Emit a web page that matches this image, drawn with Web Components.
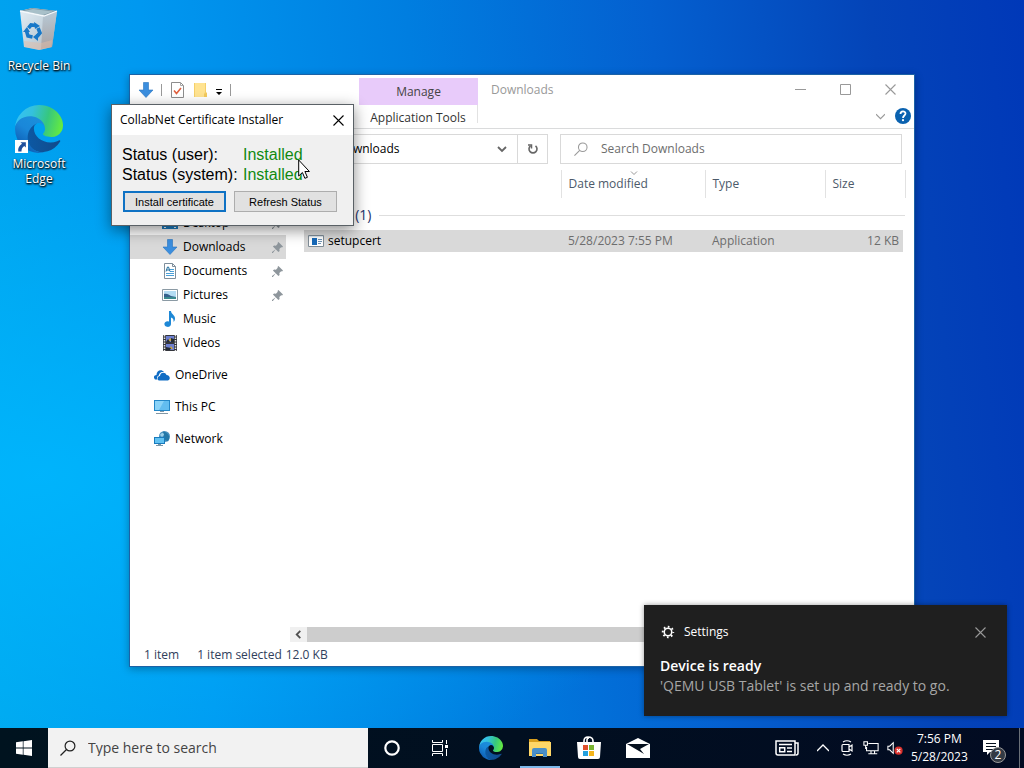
<!DOCTYPE html>
<html lang="en">
<head>
<meta charset="utf-8">
<title>Desktop</title>
<style>
    html, body {
        margin: 0;
        height: 100%;
        overflow: hidden;
        font-family: "Open Sans", "Noto Sans", sans-serif;
        font-size: 12px;
        line-height: 16px;
        color: #000;
    }
</style>
</head>
<body>
<desktop-shell>
    <desktop-shortcut icon="recycle">Recycle Bin</desktop-shortcut>
    <desktop-shortcut icon="edge" linked>Microsoft Edge</desktop-shortcut>
    <explorer-window slot="window"></explorer-window>
    <certificate-dialog slot="window"></certificate-dialog>
    <toast-notification slot="window" app="Settings">
        <span slot="title">Device is ready</span>
        'QEMU USB Tablet' is set up and ready to go.
    </toast-notification>
    <task-bar slot="taskbar"></task-bar>
</desktop-shell>

<script>
// name: [viewBox, markup]
const icons = {
    recycle: ['5 2 48 48', `
        <defs>
            <linearGradient id="bin" x1="0" y1="0" x2="1" y2="1"><stop offset="0" stop-color="#e4eef5"/><stop offset=".55" stop-color="#c3d2dc"/><stop offset="1" stop-color="#b9b4b5"/></linearGradient>
            <linearGradient id="side" x1="0" y1="0" x2="0" y2="1"><stop offset="0" stop-color="#b4c8d6"/><stop offset="1" stop-color="#a79c9b"/></linearGradient>
        </defs>
        <path d="M10 6 22 3 47 6 42 42 29 45 14 42z" fill="url(#bin)"/>
        <path d="M33 11 47 6 42 42 31 44z" fill="url(#side)" opacity=".85"/>
        <path d="M10 6 22 3 47 6 34 11z" fill="#7f99a6"/>
        <path d="M13 6.300 23 4 43 6.500 33 10z" fill="#a8c0c9"/>
        <path d="M10 6 34 11 47 6" fill="none" stroke="#f4f9fc" stroke-width="1.300"/>
        <path d="M14 36 31 38 42 35 41.500 42 30 45 14.500 42z" fill="#e0bda9" opacity=".5"/>
        <g fill="none" stroke="#1878c8" stroke-width="3.600"><path d="M18.500 23 21 20 26 20.500"/><path d="M28 23 30 28 27 31.500"/><path d="M22.500 32 18 31 16.500 26"/></g>
        <g fill="#1878c8"><path d="m24 17 6 4-5 3z"/><path d="m28 28-5 4 5 4z"/><path d="m13 27 4-5 3 5z"/></g>`],
    edge: ['0 0 256 256', `
        <defs>
            <linearGradient id="e1" x1="64" y1="178" x2="242" y2="178" gradientUnits="userSpaceOnUse"><stop stop-color="#0c59a4"/><stop offset="1" stop-color="#114a8b"/></linearGradient>
            <linearGradient id="e2" x1="140" y1="80" x2="40" y2="220" gradientUnits="userSpaceOnUse"><stop stop-color="#1b8fdb"/><stop offset=".5" stop-color="#1a87d9"/><stop offset="1" stop-color="#0f62b8"/></linearGradient>
            <linearGradient id="e3" x1="10" y1="60" x2="250" y2="120" gradientUnits="userSpaceOnUse"><stop stop-color="#35c1f1"/><stop offset=".3" stop-color="#34c1dd"/><stop offset=".65" stop-color="#36c77f"/><stop offset="1" stop-color="#66eb3e"/></linearGradient>
        </defs>
        <path fill="url(#e1)" d="M235.680 188.610a93.600 93.600 0 0 1-10.540 4.710 101.870 101.870 0 0 1-35.900 6.460c-47.320 0-88.540-32.550-88.540-74.320A31.480 31.480 0 0 1 117.130 97.960c-42.800 1.800-53.800 46.400-53.800 72.530 0 73.880 68.090 81.370 82.760 81.370 7.910 0 19.840-2.300 27-4.560l1.310-.440a128.340 128.340 0 0 0 66.600-52.800 4 4 0 0 0-5.320-5.450z"/>
        <path fill="url(#e2)" d="M105.730 241.420A79.200 79.200 0 0 1 83 220.080a80.720 80.720 0 0 1 29.500-120.040c3.120-1.470 8.450-4.130 15.540-4a32.350 32.350 0 0 1 25.690 13 31.880 31.880 0 0 1 6.360 18.660c0-.210 24.460-79.600-80-79.600-43.900 0-80 41.660-80 78.210a130.150 130.150 0 0 0 12.110 56 128 128 0 0 0 156.380 67.110 75.550 75.550 0 0 1-62.780-8z"/>
        <path fill="url(#e3)" d="M152.330 148.860c-.810 1.050-3.300 2.500-3.300 5.660 0 2.610 1.700 5.120 4.720 7.230 14.380 10 41.490 8.680 41.560 8.680a59.560 59.560 0 0 0 30.270-8.350 61.380 61.380 0 0 0 30.430-52.880c.260-22.410-8-37.310-11.340-43.910C223.460 23.840 177.720 0 128 0A128 128 0 0 0 0 126.200c.480-36.540 36.800-66.050 80-66.050 3.500 0 23.460.340 42 10.070 16.340 8.580 24.900 18.940 30.850 29.210 6.180 10.670 7.280 24.150 7.280 29.520 0 5.370-2.740 13.330-7.800 19.910z"/>`],
    shortcut: ['0 0 12 12', `<path fill="#fff" d="M0 0h12v12H0z"/><path fill="#1f4f9c" d="M5 2h5v5L8.500 5.500C6.500 7 6 8.500 6 10.500H3C2.500 7.500 4 5 6.500 3.500z"/>`],
    download: ['0 0 16 16', `<path fill="#3b8ede" stroke="#2673bf" stroke-width=".6" d="M5.500.500h5v7.500H15L8 15.500 1 8h4.500z"/>`],
    checkdoc: ['0 0 16 16', `<path fill="#fff" stroke="#8d8d8d" d="M2.500.500h9l3 3v12h-12z"/><path fill="none" stroke="#a8a8a8" d="M11.500.500v3h3"/><path fill="none" stroke="#e0603f" stroke-width="1.600" d="m5 8.500 2.500 3L12 6"/>`],
    folder: ['0 0 16 16', `<path fill="#f5d06a" d="M2 1h12v9l1 1v4H2z"/><path fill="#ffe391" d="M3 1h10v9l-1 2v3H3z"/><path fill="#f3ca5c" d="m12 12 3-1v4h-3z"/>`],
    qatcaret: ['0 0 8 8', `<path d="M1 1h6v1H1zM1 4h6L4 7z"/>`],
    pin: ['0 0 12 12', `<path fill="#8e969c" d="m7 0 5 5-1 1-1-.300-2 2 .300 2-1.300 1.300-3-3L1 12H0v-1l4-3-3-3L2.300 3.700l2 .3 2-2L6 1z"/>`],
    desktop: ['0 0 16 16', `<path fill="#1d7fc4" d="M0 2h16v12H0z"/><path fill="#49b3ee" d="M1 3h14v8H1z"/><path fill="#fff" d="M2 12h2v1H2zM12 12h2v1h-2z"/>`],
    document: ['0 0 16 16', `<path fill="#fff" stroke="#7f8f9c" d="M2.500.500h8l3 3v12h-11z"/><path fill="none" stroke="#7f8f9c" d="M10.500.500v3h3"/><path stroke="#4aa0d8" d="M8 6.500h4M8 8.500h4M4 10.500h8M4 12.500h8"/><path fill="none" stroke="#216f9f" d="M4 8.500 5.500 4h1L8 8.500M4.500 7h3"/>`],
    picture: ['0 0 16 16', `<path fill="#fff" stroke="#8b9aa4" d="M.500 2.500h15v11H.500z"/><path fill="#b4dcf3" d="M2 4h12v8H2z"/><path fill="#35618c" d="M2 7c3-1 5 1 7 2l5 1v1H2z"/><path fill="#3a8a8e" d="M2 10h12v2H2z"/>`],
    music: ['0 0 16 16', `<path fill="#1e88d6" d="M7 0h2c0 3 4 4 4 7.500 0 1.500-.500 2.500-1.500 3.500.500-3-1-4-2.500-4.500V13a3.300 2.800 0 1 1-2-2.500z"/>`],
    video: ['0 0 16 16', `<path fill="#34363c" d="M1 0h14v16H1z"/><path stroke="#e4e4e4" stroke-width="1.500" stroke-dasharray="1.500 1" d="M2.500 0v16M13.500 0v16"/><path fill="#6d7fd0" d="M4 1h8v6H4zM4 9h8v6H4z"/><path fill="#c9a644" d="m6 6 2-3 3 3zM7 14l2-3 2 3z"/><path fill="#252c35" d="m4 7 2-3 2 3zM9 3l3 1v3H9zM4 12l5 1-1 2H4z"/>`],
    onedrive: ['0 0 16 16', `<path fill="#0f6cc4" d="M1 12.500C-1 10.500 0 8 2.500 8 2.500 4 7 1.500 10 5c-4-.500-5 2-5 3.500-2 .500-2.500 2.500-1.500 4z"/><path fill="#0f6cc4" d="M5 13.500c-2.500-1-1.500-4.500 1-4.500 0-4 5.500-4.500 6.500-1 3.500 0 4.500 4.500 1.500 5.500z"/>`],
    pc: ['0 0 16 16', `<path fill="#2387c8" d="M0 1h16v11H0z"/><path fill="#62bdf0" d="M1 2h14v9H1z"/><path fill="#8ad3f8" d="M1 2h9L5 11H1z"/><path fill="#8297a5" d="M6 12h4v1H6zM2 14h12v1H2z"/>`],
    network: ['0 0 16 16', `<circle cx="10.500" cy="5.500" r="5.500" fill="#4a92c0"/><path fill="#2378a8" d="M9 .500c5 1 8 5 5 10l-4-2z"/><path fill="#9cd0ea" d="M6 4c2-3 4-2 4 0L8 6z"/><path fill="#187bbd" d="M0 6h11v7H0z"/><path fill="#62c2f2" d="M1 7h9v5H1z"/><path fill="#7896a8" d="M4 13h3v1h2v1H2v-1h2z"/>`],
    app: ['0 0 16 16', `<path fill="#fff" stroke="#7f8c96" d="M.500 2.500h15v11H.500z"/><path fill="#dce6ee" d="M1 3h14v1H1z"/><path fill="#1769b8" d="M4 5h5v7H4z"/><path stroke="#6e93b5" d="M10 6.500h4M10 8.500h4M10 10.500h3"/>`],
    minimize: ['0 0 11 11', `<path fill="none" stroke="currentColor" d="M0 5.500h11"/>`],
    maximize: ['0 0 11 11', `<path fill="none" stroke="currentColor" d="M.500.500h10v10H.500z"/>`],
    close: ['0 0 11 11', `<path fill="none" stroke="currentColor" stroke-width="1.100" d="m.500.500 10 10m0-10-10 10"/>`],
    chevron: ['0 0 10 10', `<path fill="none" stroke="currentColor" stroke-width="1.800" d="m1 3 4 4 4-4"/>`],
    thinchevron: ['0 0 8 8', `<path fill="none" stroke="currentColor" d="m0 2 4 4 4-4"/>`],
    left: ['0 0 10 10', `<path fill="none" stroke="currentColor" stroke-width="2" d="M7 1 3 5l4 4"/>`],
    refresh: ['0 0 12 12', `<path fill="none" stroke="currentColor" stroke-width="1.600" d="M8.500 2.800A4 4 0 1 1 3.500 2.800"/><path fill="none" stroke="currentColor" stroke-width="1.500" d="M1 2h3.500v3.500"/>`],
    help: ['0 0 16 16', `<circle cx="8" cy="8" r="8" fill="#0a62b0"/><path fill="none" stroke="#fff" stroke-width="1.800" d="M5.500 6c0-3.300 5-3.300 5-.500C10.500 7.500 8 7.500 8 10"/><circle cx="8" cy="12.200" r="1.100" fill="#fff"/>`],
    magnifier: ['0 0 16 16', `<path fill="none" stroke="currentColor" stroke-width="1.200" d="M6.500 9.500.500 15.500"/><circle cx="10" cy="6" r="4.900" fill="none" stroke="currentColor" stroke-width="1.200"/>`],
    gear: ['0 0 16 16', `<circle cx="8" cy="8" r="4.300" fill="none" stroke="#fff" stroke-width="1.800"/><circle cx="8" cy="8" r="6" fill="none" stroke="#fff" stroke-width="2.200" stroke-dasharray="1.900 2.812" stroke-dashoffset=".950"/>`],
    start: ['0 0 16 16', `<path fill="#fff" d="m0 2.300 6.800-1v6.300H0zM7.500 1.200 16 0v7.600H7.500zM0 8.400h6.800v6.300L0 13.700zM7.500 8.400H16V16l-8.500-1.200z"/>`],
    cortana: ['0 0 16 16', `<circle cx="8" cy="8" r="6.700" fill="none" stroke="#fff" stroke-width="2.200"/>`],
    taskview: ['0 0 16 16', `<path fill="none" stroke="#fff" d="M.500 0v2.500h10V0M.500 16v-2.500h10V16M.500 4.500h10v7H.500zM14.500 0v4M14.500 9v7"/><path fill="#fff" d="M13 5h3v3h-3z"/>`],
    files: ['0 0 24 24', `<path fill="#d99f1d" d="M1 3h8l2 2h11v15H1z"/><path fill="#ffd768" d="M1 6h22v14H1z"/><path fill="#4a8fc8" d="M4 21v-7q0-2 2-2h11q2 0 2 2v7h-4v-4H8v4z"/><path fill="#2f74ae" d="M8 17h7v1H8z"/>`],
    store: ['0 0 24 24', `<path fill="none" stroke="#fff" stroke-width="1.600" d="M7 7V5q0-4 4-4 5 0 5 4v2M10 7V4q0-2 2-2"/><path fill="#fff" d="M0 6h24l-1 15q0 2-2 2H3q-2 0-2-2z"/><path fill="#e04f2c" d="M6 9h5v5H6z"/><path fill="#7ab532" d="M12 9h5v5h-5z"/><path fill="#25a0dd" d="M6 15h5v5H6z"/><path fill="#f5b51c" d="M12 15h5v5h-5z"/>`],
    mail: ['0 0 24 24', `<path fill="#fff" d="M0 8 12 2l12 6v14H0z"/><path fill="#06111f" d="M1 8h22l-9 5 4 5-5-3z"/>`],
    news: ['0 0 24 16', `<path fill="none" stroke="#fff" stroke-width="1.500" d="M1 1h19v14H3q-2 0-2-2zM20 3h3v10q0 2-2 2"/><path fill="none" stroke="#fff" stroke-width="1.500" d="M4 4.500h13M4.700 7.700h5v4h-5zM12 8h5M12 11.500h5"/>`],
    up: ['0 0 12 12', `<path fill="none" stroke="#fff" stroke-width="1.300" d="m0 9 6-6 6 6"/>`],
    camera: ['0 0 16 16', `<path fill="none" stroke="#fff" stroke-width="1.200" d="M4 4.500h6v7H4q-1 0-1-1v-5q0-1 1-1M10 7l3-2v6l-3-2M4 2q4-2.500 8 0M4 14q4 2.500 8 0"/>`],
    lan: ['0 0 18 16', `<path fill="none" stroke="#fff" stroke-width="1.200" d="M6 3h11v8H4V7M9 11v3M13 11v3M6 14.500h10M1 1h4v4H1zM3 5v4"/>`],
    mute: ['0 0 18 16', `<path fill="none" stroke="#fff" stroke-width="1.200" d="M1 6h2l4-4v12l-4-4H1z"/><circle cx="13" cy="11" r="4.600" fill="#d9302c"/><path stroke="#fff" stroke-width="1.300" d="m11 9 4 4m0-4-4 4"/>`],
    message: ['0 0 16 16', `<path fill="#fff" d="M0 0h16v12H7l-3 3v-3H0z"/><path stroke="#06111f" d="M3 3.500h10M3 6.500h10M3 9.500h7"/>`],
    cursor: ['0 0 12 21', `<path fill="#fff" stroke="#000" d="M.700 1v16l3.700-3.500 2.500 5.800 2.500-1-2.500-5.800h4.500z"/>`]
};

// Every component clones its own template into an open shadow root
function define(name, html, setup) {
    const template = document.createElement('template');
    template.innerHTML = html;
    customElements.define(name, class extends HTMLElement {
        connectedCallback() {
            if (this.shadowRoot) return;
            const root = this.attachShadow({ mode: 'open' });
            root.appendChild(template.content.cloneNode(true));
            if (setup) setup(this, root);
        }
    });
}

define('win-icon', `
<style>
    :host { display: inline-block; flex: none; width: 16px; height: 16px; }
    svg { display: block; width: 100%; height: 100%; }
</style>
<svg aria-hidden="true"></svg>`, (host, root) => {
    const [viewBox, markup] = icons[host.getAttribute('name')];
    const svg = root.querySelector('svg');
    svg.setAttribute('viewBox', viewBox);
    svg.innerHTML = markup;
});

define('desktop-shell', `
<style>
    :host {
        display: grid;
        grid-template-rows: 1fr 40px;
        height: 100vh;
        position: relative;
        background:
            radial-gradient(ellipse at 4% 62%, rgba(0, 184, 255, .8), rgba(0, 170, 250, 0) 50%),
            linear-gradient(84deg, #00a8ee 0%, #0098f0 20%, #007ee0 44%, #0460d0 66%, #0444b8 86%, #0038b8 100%);
    }
    .shortcuts {
        display: flex;
        flex-direction: column;
        align-items: flex-start;
        gap: 32px;
        padding: 7px 0;
    }
</style>
<main class="shortcuts"><slot></slot></main>
<slot name="window"></slot>
<slot name="taskbar"></slot>`);

define('desktop-shortcut', `
<style>
    :host { display: block; width: 78px; color: #fff; text-align: center; line-height: 15px; text-shadow: 0 1px 2px #000, 1px 1px 2px #000; }
    .picture { position: relative; width: 48px; margin: 0 auto 3px; }
    .picture win-icon { display: block; width: 48px; height: 48px; }
    .picture .badge { position: absolute; left: 0; bottom: 0; width: 13px; height: 13px; }
    .label { padding: 0 6px; }
</style>
<div class="picture"></div>
<div class="label"><slot></slot></div>`, (host, root) => {
    const picture = root.querySelector('.picture');
    picture.innerHTML = `<win-icon name="${host.getAttribute('icon')}"></win-icon>`;
    if (host.hasAttribute('linked')) {
        picture.insertAdjacentHTML('beforeend', '<win-icon class="badge" name="shortcut"></win-icon>');
    }
});

define('nav-item', `
<style>
    :host { display: block; }
    a {
        display: flex;
        align-items: center;
        gap: 5px;
        height: 24px;
        padding: 0 3px 0 32px;
        color: inherit;
        text-decoration: none;
    }
    :host([top]) a { padding-left: 24px; }
    :host([selected]) a { background: #d9d9d9; }
    span { flex: 1; }
    .pin { width: 11px; height: 11px; }
</style>
<a href="#"><span><slot></slot></span></a>`, (host, root) => {
    const link = root.querySelector('a');
    link.insertAdjacentHTML('afterbegin', `<win-icon name="${host.getAttribute('icon')}"></win-icon>`);
    if (host.hasAttribute('pinned')) {
        link.insertAdjacentHTML('beforeend', '<win-icon class="pin" name="pin"></win-icon>');
    }
});

define('file-table', `
<style>
    :host { display: block; padding: 6px 7px 0 14px; }
    table { width: 100%; border-collapse: collapse; table-layout: fixed; }
    th, td { padding: 0 7px; font-weight: normal; text-align: left; }
    thead th { height: 28px; border-right: 1px solid #e2e2e2; color: #4c5a6a; position: relative; }
    thead win-icon { position: absolute; top: 0; left: 68px; width: 8px; height: 6px; color: #777; }
    .group { height: 32px; }
    .group th { padding: 2px 0 0 8px; font-size: 14px; color: #26346c; }
    .group div { display: flex; align-items: center; gap: 8px; }
    .group div::after { content: ""; flex: 1; height: 1px; background: #dedede; }
    tbody td { height: 22px; background: #d9d9d9; color: #6d6d6d; }
    tbody td:first-child { color: #000; padding-left: 4px; }
    tbody td:last-child { text-align: right; padding-right: 4px; border-right: 4px solid #fff; }
    .file { display: flex; align-items: center; gap: 4px; }
    .date { width: 144px; }
    .type { width: 120px; }
    .size { width: 80px; }
</style>
<table>
    <colgroup><col><col class="date"><col class="type"><col class="size"></colgroup>
    <thead>
        <tr><th aria-label="Name"></th><th>Date modified<win-icon name="thinchevron"></win-icon></th><th>Type</th><th>Size</th></tr>
    </thead>
    <tbody>
        <tr class="group"><th colspan="4"><div>Today (1)</div></th></tr>
        <tr>
            <td><div class="file"><win-icon name="app"></win-icon>setupcert</div></td>
            <td>5/28/2023 7:55 PM</td>
            <td>Application</td>
            <td>12 KB</td>
        </tr>
    </tbody>
</table>`);

define('explorer-window', `
<style>
    :host {
        position: absolute;
        inset: 74px 109px 101px 129px;
        display: flex;
        flex-direction: column;
        border: 1px solid #1c62a6;
        background: #fff;
        box-shadow: 0 2px 8px rgba(0, 0, 0, .3);
    }
    button { border: 0; padding: 0; background: none; color: inherit; font: inherit; display: grid; place-items: center; }
    input { border: 0; padding: 0; background: none; font: inherit; color: inherit; min-width: 0; outline: 0; }
    header { display: grid; grid-template-columns: 229px 119px 1fr; height: 53px; border-bottom: 1px solid #dadbdc; }
    .quick { display: flex; align-items: center; height: 30px; padding-left: 8px; gap: 7px; }
    .quick i { width: 1px; height: 12px; background: #999; }
    .quick .caret { width: 8px; height: 8px; margin-top: 3px; }
    .tabs { display: flex; flex-direction: column; padding-top: 3px; text-align: center; color: #444; }
    .manage { height: 27px; line-height: 28px; background: #e8cbfa; }
    .tools { height: 18px; padding-top: 4px; line-height: 18px; border-right: 1px solid #e2e2e2; color: #333; }
    .top { display: flex; height: 30px; padding-right: 1px; color: #999; }
    .top strong { flex: 1; padding-left: 13px; line-height: 30px; font-weight: normal; }
    .top button { width: 45px; height: 29px; }
    .top win-icon { width: 11px; height: 11px; }
    .ribbon { display: flex; justify-content: flex-end; align-items: center; gap: 10px; height: 22px; padding-right: 3px; color: #999; }
    .ribbon button:first-child win-icon { width: 9px; height: 9px; }
    .bar { display: grid; grid-template-columns: 312px 1fr; gap: 12px; padding: 5px 12px 0 106px; height: 30px; }
    .box { display: flex; align-items: center; border: 1px solid #d9d9d9; }
    .address input { flex: 1; padding-left: 100px; }
    .address button { width: 30px; height: 28px; color: #666; }
    .address button:last-child { border-left: 1px solid #d9d9d9; }
    .address win-icon { width: 12px; height: 12px; }
    .address button:first-of-type win-icon { width: 10px; height: 10px; }
    .search { gap: 13px; padding-left: 13px; color: #999; }
    .search win-icon { width: 14px; height: 14px; }
    .search input { flex: 1; }
    .search input::placeholder { color: #6d6d6d; opacity: 1; }
    .main { flex: 1; display: grid; grid-template-columns: 160px 1fr; min-height: 0; }
    nav { padding: 47px 4px 0 0; }
    nav-item[top] { margin-top: 8px; }
    .files { display: flex; flex-direction: column; }
    file-table { flex: 1; }
    .scroll { display: flex; height: 15px; margin-bottom: 1px; background: #f0f0f0; }
    .scroll button { width: 17px; color: #505050; }
    .scroll win-icon { width: 9px; height: 9px; }
    .scroll div { flex: 1; margin-right: 17px; background: #cdcdcd; }
    footer { display: flex; align-items: center; height: 23px; padding-left: 14px; color: #30405c; }
    footer span { margin-right: 18px; }
    footer span + span { margin-right: 4px; }
</style>
<header>
    <div class="quick">
        <win-icon name="download"></win-icon><i></i>
        <button aria-label="Properties"><win-icon name="checkdoc"></win-icon></button>
        <button aria-label="New folder"><win-icon name="folder"></win-icon></button>
        <button aria-label="Customize toolbar"><win-icon class="caret" name="qatcaret"></win-icon></button><i></i>
    </div>
    <div class="tabs"><div class="manage">Manage</div><button class="tools">Application Tools</button></div>
    <div>
        <div class="top">
            <strong>Downloads</strong>
            <button aria-label="Minimize"><win-icon name="minimize"></win-icon></button>
            <button aria-label="Maximize"><win-icon name="maximize"></win-icon></button>
            <button aria-label="Close"><win-icon name="close"></win-icon></button>
        </div>
        <div class="ribbon">
            <button aria-label="Expand ribbon"><win-icon name="thinchevron"></win-icon></button>
            <button aria-label="Help"><win-icon name="help"></win-icon></button>
        </div>
    </div>
</header>
<div class="bar">
    <div class="box address">
        <input aria-label="Address" value="Downloads">
        <button aria-label="Previous locations"><win-icon name="chevron"></win-icon></button>
        <button aria-label="Refresh"><win-icon name="refresh"></win-icon></button>
    </div>
    <div class="box search">
        <win-icon name="magnifier"></win-icon>
        <input type="search" aria-label="Search Downloads" placeholder="Search Downloads">
    </div>
</div>
<div class="main">
    <nav>
        <nav-item icon="desktop" pinned>Desktop</nav-item>
        <nav-item icon="download" pinned selected>Downloads</nav-item>
        <nav-item icon="document" pinned>Documents</nav-item>
        <nav-item icon="picture" pinned>Pictures</nav-item>
        <nav-item icon="music">Music</nav-item>
        <nav-item icon="video">Videos</nav-item>
        <nav-item icon="onedrive" top>OneDrive</nav-item>
        <nav-item icon="pc" top>This PC</nav-item>
        <nav-item icon="network" top>Network</nav-item>
    </nav>
    <div class="files">
        <file-table></file-table>
        <div class="scroll"><button aria-label="Scroll left"><win-icon name="left"></win-icon></button><div></div></div>
    </div>
</div>
<footer><span>1 item</span><span>1 item selected</span><span>12.0 KB</span></footer>`);

define('certificate-dialog', `
<style>
    :host {
        position: absolute;
        left: 111px;
        top: 104px;
        width: 241px;
        border: 1px solid #5a6166;
        background: #f0f0f0;
        box-shadow: 0 4px 14px rgba(0, 0, 0, .45);
    }
    header { display: flex; align-items: center; height: 30px; padding-left: 8px; background: #fff; }
    header span { flex: 1; }
    header button { width: 30px; height: 28px; padding: 0; border: 0; background: none; display: grid; place-items: center; }
    header win-icon { width: 11px; height: 11px; }
    .body { padding: 10px 16px 13px 10px; font-family: "Liberation Sans", Arial, sans-serif; }
    dl { display: grid; grid-template-columns: 121px 1fr; margin: 0; font-size: 16px; line-height: 20px; }
    dt { white-space: nowrap; }
    dd { margin: 0; color: #108a10; }
    .buttons { display: grid; grid-template-columns: 1fr 1fr; gap: 8px; margin: 6px 0 0 1px; }
    .buttons button { height: 21px; padding: 0; border: 1px solid #adadad; background: #e1e1e1; font: 11px "Liberation Sans", Arial, sans-serif; color: #000; }
    .buttons button:first-child { border: 2px solid #0f72c4; }
    .cursor { position: absolute; left: 186px; top: 54px; width: 12px; height: 21px; }
</style>
<header><span>CollabNet Certificate Installer</span><button aria-label="Close"><win-icon name="close"></win-icon></button></header>
<div class="body">
    <dl>
        <dt>Status (user):</dt><dd>Installed</dd>
        <dt>Status (system):</dt><dd>Installed</dd>
    </dl>
    <div class="buttons"><button>Install certificate</button><button>Refresh Status</button></div>
</div>
<win-icon class="cursor" name="cursor"></win-icon>`);

define('toast-notification', `
<style>
    :host {
        position: absolute;
        right: 17px;
        bottom: 52px;
        box-sizing: border-box;
        width: 363px;
        padding: 15px 16px 20px;
        background: #1f1f1f;
        box-shadow: 0 0 5px rgba(0, 0, 0, .4);
        color: #a6a6a6;
        font-size: 14px;
        line-height: 20px;
    }
    header { display: flex; align-items: center; gap: 8px; height: 24px; margin-bottom: 12px; color: #fff; font-size: 12px; }
    header span { flex: 1; }
    button { width: 22px; height: 22px; padding: 0; border: 0; background: none; color: #999; display: grid; place-items: center; }
    button win-icon { width: 11px; height: 11px; }
    .gear { width: 14px; height: 14px; padding: 1px; }
    .title { color: #fff; font-weight: 600; }
</style>
<header><win-icon class="gear" name="gear"></win-icon><span class="app"></span><button aria-label="Dismiss"><win-icon name="close"></win-icon></button></header>
<div class="title"><slot name="title"></slot></div>
<div><slot></slot></div>`, (host, root) => {
    root.querySelector('.app').textContent = host.getAttribute('app');
});

define('task-bar', `
<style>
    :host { display: flex; color: #fff; background: linear-gradient(90deg, #00131f, #010f20 50%, #020b22); }
    button { border: 0; padding: 0; background: none; color: inherit; font: inherit; display: grid; place-items: center; width: 48px; height: 40px; }
    .search { display: flex; align-items: center; gap: 12px; box-sizing: border-box; width: 320px; padding: 1px 0 0 12px; border: 1px solid #d0d0d0; border-width: 0 0 1px; background: #f2f2f2; color: #222; }
    .search input { flex: 1; min-width: 0; padding: 0; border: 0; outline: 0; background: none; font: inherit; font-size: 14px; }
    .search input::placeholder { color: #444; opacity: 1; }
    .apps { display: flex; gap: 1px; margin-left: 3px; }
    .apps win-icon { width: 24px; height: 24px; }
    .active { background: linear-gradient(#7db8ea, #7db8ea) center bottom / 40px 2px no-repeat; }
    .tray { display: flex; margin-left: auto; }
    .tray button { width: 24px; }
    .tray .news { width: 32px; margin-right: 8px; }
    .news win-icon { width: 24px; height: 16px; }
    .up win-icon { width: 12px; height: 12px; }
    .tray .clock { width: 56px; margin-left: 4px; line-height: 18px; text-align: center; white-space: nowrap; }
    .tray .action { width: 48px; position: relative; }
    .count {
        position: absolute;
        left: 23px;
        top: 19px;
        box-sizing: border-box;
        width: 16px;
        height: 16px;
        border: 1px solid #999;
        border-radius: 50%;
        background: #333a44;
        font-size: 12px;
        line-height: 14px;
        text-align: center;
    }
    .show { width: 4px; margin-left: 4px; border-left: 1px solid #6a7078; }
</style>
<button aria-label="Start"><win-icon name="start"></win-icon></button>
<label class="search"><win-icon name="magnifier"></win-icon><input type="search" aria-label="Type here to search" placeholder="Type here to search"></label>
<button aria-label="Cortana"><win-icon name="cortana"></win-icon></button>
<button aria-label="Task View"><win-icon name="taskview"></win-icon></button>
<div class="apps">
    <button aria-label="Edge"><win-icon name="edge"></win-icon></button>
    <button class="active" aria-label="File Explorer"><win-icon name="files"></win-icon></button>
    <button aria-label="Store"><win-icon name="store"></win-icon></button>
    <button aria-label="Mail"><win-icon name="mail"></win-icon></button>
</div>
<div class="tray">
    <button class="news" aria-label="News"><win-icon name="news"></win-icon></button>
    <button class="up" aria-label="Hidden icons"><win-icon name="up"></win-icon></button>
    <button aria-label="Meet now"><win-icon name="camera"></win-icon></button>
    <button aria-label="Network"><win-icon name="lan"></win-icon></button>
    <button aria-label="Volume"><win-icon name="mute"></win-icon></button>
    <button class="clock"><span>7:56 PM<br>5/28/2023</span></button>
    <button class="action" aria-label="Notifications"><win-icon name="message"></win-icon><span class="count">2</span></button>
    <div class="show"></div>
</div>`);
</script>
</body>
</html>
